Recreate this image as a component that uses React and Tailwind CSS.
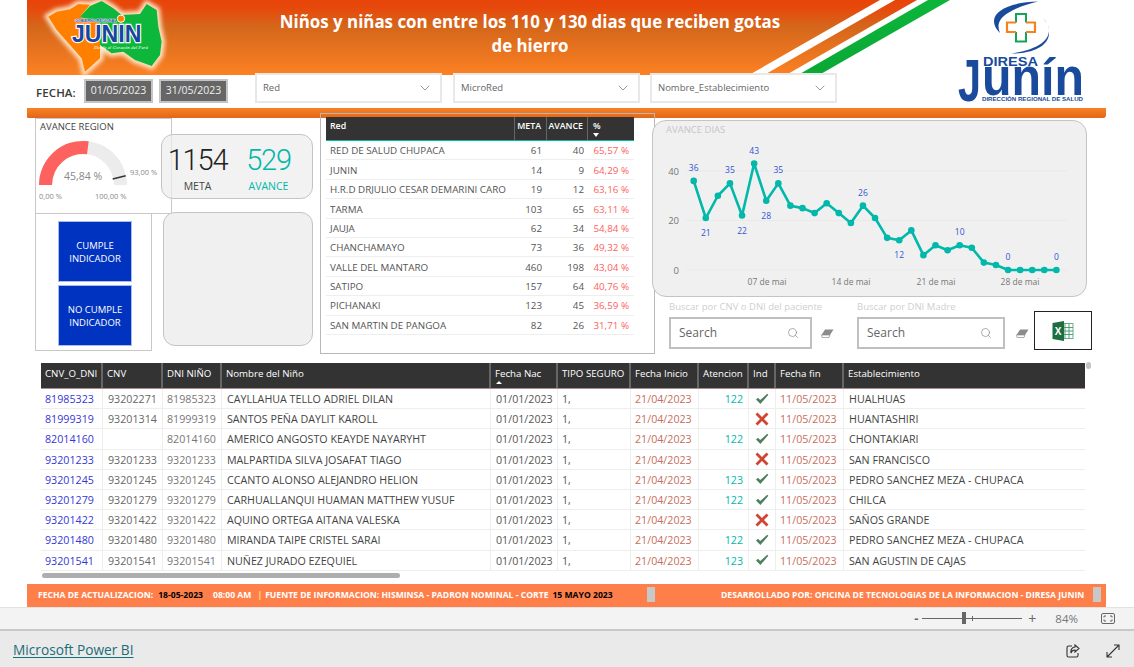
import { ChevronDown, Search } from 'lucide-react';

const redes = [
  ['RED DE SALUD CHUPACA', 61, 40, '65,57 %'],
  ['JUNIN', 14, 9, '64,29 %'],
  ['H.R.D DRJULIO CESAR DEMARINI CARO', 19, 12, '63,16 %'],
  ['TARMA', 103, 65, '63,11 %'],
  ['JAUJA', 62, 34, '54,84 %'],
  ['CHANCHAMAYO', 73, 36, '49,32 %'],
  ['VALLE DEL MANTARO', 460, 198, '43,04 %'],
  ['SATIPO', 157, 64, '40,76 %'],
  ['PICHANAKI', 123, 45, '36,59 %'],
  ['SAN MARTIN DE PANGOA', 82, 26, '31,71 %'],
];

const ninos = [
  ['81985323', '93202271', '81985323', 'CAYLLAHUA TELLO ADRIEL DILAN', '122', true, 'HUALHUAS'],
  ['81999319', '93201314', '81999319', 'SANTOS PEÑA DAYLIT KAROLL', '', false, 'HUANTASHIRI'],
  ['82014160', '', '82014160', 'AMERICO ANGOSTO KEAYDE NAYARYHT', '122', true, 'CHONTAKIARI'],
  ['93201233', '93201233', '93201233', 'MALPARTIDA SILVA JOSAFAT TIAGO', '', false, 'SAN FRANCISCO'],
  ['93201245', '93201245', '93201245', 'CCANTO ALONSO ALEJANDRO HELION', '123', true, 'PEDRO SANCHEZ MEZA - CHUPACA'],
  ['93201279', '93201279', '93201279', 'CARHUALLANQUI HUAMAN MATTHEW YUSUF', '122', true, 'CHILCA'],
  ['93201422', '93201422', '93201422', 'AQUINO ORTEGA AITANA VALESKA', '', false, 'SAÑOS GRANDE'],
  ['93201480', '93201480', '93201480', 'MIRANDA TAIPE CRISTEL SARAI', '122', true, 'PEDRO SANCHEZ MEZA - CHUPACA'],
  ['93201541', '93201541', '93201541', 'NUÑEZ JURADO EZEQUIEL', '123', true, 'SAN AGUSTIN DE CAJAS'],
];

const avance = [36, 21, 30, 35, 22, 43, 28, 35, 26, 25, 23, 27, 23, 19, 26, 21, 13, 12, 16, 6, 10, 8, 10, 9, 3, 2, 0, 0, 0, 0, 0];
const etiquetas = { 0: -1, 1: 1, 3: -1, 4: 1, 5: -1, 6: 1, 7: -1, 14: -1, 17: 1, 22: -1, 26: -1, 30: -1 };

const gridCols = 'grid grid-cols-[62px_60px_59px_269px_67px_73px_68px_50px_27px_68px_240px]';
const celda = 'h-full flex items-center border-r border-[#eee] whitespace-nowrap pt-[1px]';

function Banner() {
  return (
    <div className="relative h-[75px] flex">
      <svg className="absolute inset-0" width="1079" height="75" viewBox="0 0 1079 75">
        <defs>
          <linearGradient id="naranja" gradientUnits="userSpaceOnUse" x1="0" y1="0" x2="0" y2="75">
            <stop offset="0" stopColor="#e8440a" />
            <stop offset="0.12" stopColor="#e64a0c" />
            <stop offset="0.35" stopColor="#d4661b" />
            <stop offset="1" stopColor="#fc8123" />
          </linearGradient>
          <linearGradient id="verde" gradientUnits="userSpaceOnUse" x1="0" y1="0" x2="0" y2="75">
            <stop offset="0" stopColor="#0cb53a" />
            <stop offset="1" stopColor="#0aa836" />
          </linearGradient>
        </defs>
        <polygon points="0,0 853,0 722,75 0,75" fill="url(#naranja)" />
        <polygon points="868,0 890,0 759,75 737,75" fill="url(#naranja)" />
        <polygon points="901,0 923,0 792,75 771,75" fill="url(#verde)" />
      </svg>
      <LogoGobierno />
      <h1 className="relative w-[530px] ml-[90px] px-[10px] pt-[10px] text-center text-white font-bold text-[16.9px] leading-[24px]">
        Niños y niñas con entre los 110 y 130 dias que reciben gotas de hierro
      </h1>
      <LogoDiresa />
    </div>
  );
}

function LogoGobierno() {
  return (
    <svg className="relative ml-[8px] shrink-0" width="140" height="76" viewBox="0 0 420 228">
      <defs>
        <filter id="halo" x="-20%" y="-20%" width="140%" height="140%">
          <feGaussianBlur stdDeviation="7" />
        </filter>
      </defs>
      <path
        d="M65 35 L105 28 L130 12 L165 14 L200 3 L235 25 L260 45 L315 42 L335 12 L365 30 L370 80 L380 125 L375 165 L350 198 L300 180 L265 155 L230 160 L195 140 L195 175 L150 215 L140 175 L105 135 L65 90 L40 50 Z"
        fill="#ffe3c2"
        stroke="#ffe3c2"
        strokeWidth="20"
        filter="url(#halo)"
      />
      <path d="M65 35 L105 28 L130 12 L165 14 L135 50 L195 70 L195 175 L150 215 L140 175 L105 135 L65 90 L40 50 Z" fill="#ff8000" />
      <path d="M135 50 L165 18 L200 3 L235 25 L260 45 L315 42 L335 12 L365 30 L370 80 L380 125 L375 165 L350 198 L300 180 L265 155 L230 160 L195 135 L195 70 Z" fill="#0cb73b" />
      <circle cx="258" cy="56" r="11" fill="#ff8000" stroke="#fff" strokeWidth="3" />
      <text x="120" y="66" textLength="125" lengthAdjust="spacingAndGlyphs" fontFamily="Liberation Sans" fontWeight="700" fontSize="11" fill="#1746a2" stroke="#fff" strokeWidth="2" paintOrder="stroke">GOBIERNO REGIONAL</text>
      <text x="215" y="125" textAnchor="middle" textLength="208" lengthAdjust="spacingAndGlyphs" fontFamily="Liberation Sans" fontWeight="700" fontSize="72" fill="#1746a2" stroke="#fff" strokeWidth="7" paintOrder="stroke">JUNIN</text>
      <text x="258" y="146" textAnchor="middle" fontFamily="Liberation Serif" fontStyle="italic" fontSize="15" fill="#fff">Desde el Corazón del Perú</text>
    </svg>
  );
}

function LogoDiresa() {
  return (
    <svg className="relative ml-[155px] shrink-0" width="150" height="116" viewBox="0 0 150 116">
      <path d="M88 1.5 C62 2 44 10 44 21 C44 26 47 30 50 33 C47 26 48 19 58 13 C66 8 77 4 88 1.5 Z" fill="#1a4a9c" />
      <path d="M93 18 C100 26 102 35 92 43 C84 49 72 52 61 53.5 C78 54 99 48 99 33 C99 27 97 22 93 18 Z" fill="#1a4a9c" />
      <path d="M66 22.5 V14 H76 V22.5 M66 32 V41.5 H76 V32" fill="none" stroke="#12a55a" strokeWidth="2" />
      <path d="M66 22.5 H57 V32 H66 M76 22.5 H85 V32 H76" fill="none" stroke="#f58220" strokeWidth="2.2" />
      <text x="33" y="66" textLength="55" lengthAdjust="spacingAndGlyphs" fontFamily="Liberation Sans" fontWeight="700" fontSize="12.5" fill="#1a4a9c">DIRESA</text>
      <text x="8" y="101" textLength="23" lengthAdjust="spacingAndGlyphs" fontFamily="Liberation Sans" fontWeight="700" fontSize="60" fill="#1a4a9c">J</text>
      <text x="32" y="95" textLength="102" lengthAdjust="spacingAndGlyphs" fontFamily="Liberation Sans" fontWeight="700" fontSize="51" fill="#1a4a9c">unín</text>
      <text x="32" y="101" textLength="101" lengthAdjust="spacingAndGlyphs" fontFamily="Liberation Sans" fontWeight="700" fontSize="5" fill="#1a4a9c">DIRECCIÓN REGIONAL DE SALUD</text>
    </svg>
  );
}

function Slicer({ label, className }) {
  return (
    <div className={`w-[187px] h-[30px] bg-white border-2 border-[#e8e8e8] flex items-center justify-between pl-[6px] pr-[7px] ${className}`}>
      <span className="text-[9.5px] text-[#666]">{label}</span>
      <ChevronDown size={16} strokeWidth={0.9} className="text-[#555]" />
    </div>
  );
}

function Filtros() {
  return (
    <div className="relative h-[35px] -mt-[2px] flex items-start">
      <span className="ml-[9px] mt-[11px] w-[49px] text-[11.5px] font-semibold text-[#3a3a3a] tracking-[0.1px]">FECHA:</span>
      <span className="mt-[6px] -ml-[1px] w-[69px] h-[24px] bg-[#666] border-2 border-[#c4c4c4] flex items-center justify-center text-[10.5px] text-[#eee]">01/05/2023</span>
      <span className="mt-[6px] ml-[6px] w-[69px] h-[24px] bg-[#666] border-2 border-[#c4c4c4] flex items-center justify-center text-[10.5px] text-[#eee]">31/05/2023</span>
      <Slicer label="Red" className="ml-[27px]" />
      <Slicer label="MicroRed" className="ml-[11px]" />
      <Slicer label="Nombre_Establecimiento" className="ml-[10px]" />
    </div>
  );
}

function Gauge() {
  return (
    <div className="h-[96px] border border-[#c8c8c8] bg-white">
      <p className="pl-[4px] pt-[1px] text-[9.5px] leading-[13px] text-[#444]">AVANCE REGION</p>
      <svg width="134" height="70" viewBox="0 0 134 70" className="mt-[5px]">
        <path d="M 3 47 A 44 44 0 0 1 91 47 L 78 47 A 31 31 0 0 0 16 47 Z" fill="#ececec" />
        <path d="M 3 47 A 44 44 0 0 1 52.7 3.3 L 51 16.2 A 31 31 0 0 0 16 47 Z" fill="#fd625e" />
        <line x1="76.7" y1="41" x2="89.7" y2="37.7" stroke="#333" strokeWidth="1.4" />
        <text x="47" y="42" textAnchor="middle" fontSize="10.5" fill="#888">45,84 %</text>
        <text x="3" y="61" fontSize="7.5" fill="#888">0,00 %</text>
        <text x="59" y="61" fontSize="7.5" fill="#888">100,00 %</text>
        <text x="94" y="37" fontSize="7.5" fill="#888">93,00 %</text>
      </svg>
    </div>
  );
}

function BotonAzul({ children }) {
  return (
    <div className="w-[74px] h-[61px] bg-[#0033bf] border border-[#a9bde8] flex items-center justify-center text-center text-[9.5px] leading-[13px] text-white">
      {children}
    </div>
  );
}

function Kpi({ valor, label, color, labelColor }) {
  return (
    <div className="w-[71px] flex flex-col items-center">
      <span className={`font-['Roboto'] font-light text-[29px] leading-[32px] tracking-[-1.2px] ${color}`}>{valor}</span>
      <span className={`text-[10.5px] leading-[14px] mt-[3px] ${labelColor}`}>{label}</span>
    </div>
  );
}

function TablaRedes() {
  return (
    <div className="relative w-[335px] h-[241px] -mt-[5px] ml-[7px] border border-[#b8b8b8] pl-[5px] pt-[3px]">
      <div className="w-[308px]">
        <div className="grid grid-cols-[189px_32px_41px_46px] h-[24px] bg-[#333] border-b border-[#01b8aa] text-[8.8px] font-semibold text-white">
          <span className="pl-[4px] pt-[3px] border-r border-[#666]">Red</span>
          <span className="pr-[5px] pt-[3px] text-right border-r border-[#666]">META</span>
          <span className="pr-[4px] pt-[3px] text-right border-r border-[#666]">AVANCE</span>
          <span className="relative pl-[5px] pt-[3px]">
            %
            <span className="absolute left-[5px] top-[16px] w-0 h-0 border-l-[3px] border-r-[3px] border-t-[4px] border-l-transparent border-r-transparent border-t-white" />
          </span>
        </div>
        {redes.map(([red, meta, av, pct]) => (
          <div key={red} className="grid grid-cols-[189px_32px_41px_46px] h-[19.4px] pt-[3px] items-center border-b border-[#eee] text-[9.8px] text-[#555]">
            <span className="pl-[4px] whitespace-nowrap">{red}</span>
            <span className="pr-[5px] text-right">{meta}</span>
            <span className="pr-[4px] text-right">{av}</span>
            <span className="pr-[5px] text-right text-[#fd625e]">{pct}</span>
          </div>
        ))}
      </div>
    </div>
  );
}

function GraficoDias() {
  const px = (i) => 40.7 + i * 12.09;
  const py = (v) => 149 - v * 2.475;
  const puntos = avance.map((v, i) => `${px(i)},${py(v)}`).join(' ');
  return (
    <div className="w-[435px] h-[177px] rounded-[14px] border border-[#c4c4c4] bg-[#f0f0f0]">
      <svg width="433" height="175" viewBox="0 0 433 175">
        <text x="13" y="12" fontSize="9.5" fill="#c6c6c6">AVANCE DIAS</text>
        {[0, 20, 40].map((v) => (
          <g key={v}>
            <line x1="33" x2="414" y1={py(v)} y2={py(v)} stroke="#e9e9e9" />
            <text x="26" y={py(v) + 3.5} textAnchor="end" fontSize="9.5" fill="#777">{v}</text>
          </g>
        ))}
        {[['07 de mai', 114], ['14 de mai', 198], ['21 de mai', 283], ['28 de mai', 367]].map(([t, x]) => (
          <text key={t} x={x} y="164" textAnchor="middle" fontSize="8.5" fill="#777">{t}</text>
        ))}
        <polyline points={puntos} fill="none" stroke="#01b8aa" strokeWidth="2.6" strokeLinejoin="round" />
        {avance.map((v, i) => (
          <circle key={i} cx={px(i)} cy={py(v)} r="3.3" fill="#01b8aa" />
        ))}
        {Object.entries(etiquetas).map(([i, dir]) => (
          <text
            key={i}
            x={px(+i)}
            y={py(avance[i]) + (dir < 0 ? -10 : 18)}
            textAnchor="middle"
            fontSize="8.5"
            fill="#2f55d4"
          >
            {avance[i]}
          </text>
        ))}
      </svg>
    </div>
  );
}

function Borrador() {
  return (
    <svg width="13" height="9" viewBox="0 0 13 9" className="shrink-0">
      <path d="M4 0.5 H12.5 L9 6 H0.5 Z" fill="#8c8c8c" />
      <path d="M0.5 6 H9 L8 8.5 H1 Z" fill="#fff" stroke="#8c8c8c" strokeWidth="0.7" />
    </svg>
  );
}

function Buscador({ label, ancho, anchoCaja, gapBorrador }) {
  return (
    <div className={ancho}>
      <p className="text-[9.5px] leading-[13px] text-[#cfcfcf] whitespace-nowrap">{label}</p>
      <div className="mt-[4px] flex items-center">
        <div className={`${anchoCaja} h-[32px] border-2 border-[#c0c0c0] bg-white flex items-center justify-between pl-[8px] pr-[11px]`}>
          <span className="text-[12px] text-[#666]">Search</span>
          <Search size={12} strokeWidth={1.2} className="text-[#777]" />
        </div>
        <span className={gapBorrador}><Borrador /></span>
      </div>
    </div>
  );
}

function IconoExcel() {
  return (
    <svg width="22" height="20" viewBox="0 0 22 20">
      <rect x="9" y="2.5" width="12" height="15" fill="#fff" stroke="#6fae8d" />
      <path d="M13 2.5 V17.5 M17 2.5 V17.5 M9 6.5 H21 M9 10 H21 M9 13.5 H21" stroke="#3f9a6b" strokeWidth="0.9" />
      <polygon points="0.5,2 12,0 12,20 0.5,18" fill="#1d6f42" />
      <text x="6.2" y="13.5" textAnchor="middle" fontFamily="Liberation Sans" fontWeight="700" fontSize="10" fill="#fff">X</text>
    </svg>
  );
}

function FiltrosBusqueda() {
  return (
    <div className="relative h-[56px] flex items-start">
      <div className="ml-[17px] mt-[3px]">
        <Buscador label="Buscar por CNV o DNI del paciente" ancho="w-[188px]" anchoCaja="w-[143px]" gapBorrador="ml-[9px]" />
      </div>
      <div className="mt-[3px]">
        <Buscador label="Buscar por DNI Madre" ancho="w-[177px]" anchoCaja="w-[148px]" gapBorrador="ml-[11px]" />
      </div>
      <div className="mt-[14px] w-[58px] h-[39px] border-[1.5px] border-[#222] bg-white flex items-center justify-center">
        <IconoExcel />
      </div>
    </div>
  );
}

function IconoInd({ ok }) {
  if (ok) {
    return (
      <svg width="14" height="12" viewBox="0 0 14 12">
        <path d="M1 6.5 L3 4.8 L5.2 7 L12.2 0.8 L13.4 1.8 L5.4 11 Z" fill="#4f7f5f" />
      </svg>
    );
  }
  return (
    <svg width="14" height="14" viewBox="0 0 14 14">
      <path d="M1.5 1.5 L12.5 12.5 M12.5 1.5 L1.5 12.5" stroke="#cf4433" strokeWidth="2.8" />
    </svg>
  );
}

function TablaNinos() {
  const headers = ['CNV_O_DNI', 'CNV', 'DNI NIÑO', 'Nombre del Niño', 'Fecha Nac', 'TIPO SEGURO', 'Fecha Inicio', 'Atencion', 'Ind', 'Fecha fin', 'Establecimiento'];
  return (
    <div className="relative ml-[14px] w-[1044px]">
      <div className={`${gridCols} h-[26px] bg-[#333] border-b border-[#a98d8d] text-[9.7px] text-white`}>
        {headers.map((h) => (
          <span key={h} className="relative pl-[4px] pt-[4px] border-r-2 border-[#666] last:border-r-0 whitespace-nowrap">
            {h}
            {h === 'Fecha Nac' && (
              <span className="absolute left-[5px] top-[18px] w-0 h-0 border-l-[3px] border-r-[3px] border-b-[3px] border-l-transparent border-r-transparent border-b-white" />
            )}
          </span>
        ))}
      </div>
      {ninos.map((n) => (
        <div key={n[0]} className={`${gridCols} h-[20.2px] border-b border-[#eee] text-[10.7px] text-[#444]`}>
          <span className={`${celda} pl-[4px] text-[#3636d6]`}>{n[0]}</span>
          <span className={`${celda} pl-[5px] text-[#666]`}>{n[1]}</span>
          <span className={`${celda} pl-[4px] text-[#777]`}>{n[2]}</span>
          <span className={`${celda} pl-[5px]`}>{n[3]}</span>
          <span className={`${celda} pl-[5px] text-[#555]`}>01/01/2023</span>
          <span className={`${celda} pl-[4px] text-[#555]`}>1,</span>
          <span className={`${celda} pl-[4px] text-[#c66e5b]`}>21/04/2023</span>
          <span className={`${celda} pr-[5px] justify-end text-[#01b8aa]`}>{n[4]}</span>
          <span className="h-full flex items-center border-r border-[#eee] pl-[6px]"><IconoInd ok={n[5]} /></span>
          <span className={`${celda} pl-[4px] text-[#c66e5b]`}>11/05/2023</span>
          <span className="h-full flex items-center whitespace-nowrap pt-[1px] pl-[5px]">{n[6]}</span>
        </div>
      ))}
      <div className="absolute right-[-6px] top-[-1px] w-[5px] h-[7px] rounded-full bg-[#c4c4c4]" />
      <div className="mt-[2px] w-[358px] h-[5px] ml-[1px] rounded-full bg-[#aeaeae]" />
    </div>
  );
}

function PieReporte() {
  return (
    <div className="relative mt-[6px] h-[23px] bg-[#ff7f4a] flex items-center text-[8.6px] font-bold text-white whitespace-nowrap">
      <span className="ml-[11px]">FECHA DE ACTUALIZACION:</span>
      <span className="ml-[5px] text-black">18-05-2023</span>
      <span className="ml-[10px]">08:00 AM</span>
      <span className="ml-[6px] text-[#ffe070]">|</span>
      <span className="ml-[3px]">FUENTE DE INFORMACION: HISMINSA - PADRON NOMINAL - CORTE</span>
      <span className="ml-[4px] text-black">15 MAYO 2023</span>
      <span className="absolute left-[620px] top-[3px] w-[8px] h-[15px] bg-[#c8c8c8]" />
      <span className="absolute left-[694px] top-[5px]">DESARROLLADO POR: OFICINA DE TECNOLOGIAS DE LA INFORMACION - DIRESA JUNIN</span>
      <span className="absolute right-[5px] top-[3px] w-[8px] h-[15px] bg-[#c8c8c8]" />
    </div>
  );
}

function BarraZoom() {
  return (
    <div className="h-[24px] bg-[#f3f3f3] border-t border-[#e2e2e2] border-b-2 border-b-[#c8c8c8] flex items-center justify-end pr-[19px] text-[#666]">
      <span className="text-[13px] font-bold leading-none mr-[4px]">-</span>
      <div className="relative w-[100px] h-[1px] bg-[#666]">
        <span className="absolute left-[40px] -top-[6px] w-[4px] h-[12px] bg-[#666]" />
        <span className="absolute left-[50px] -top-[2px] w-[1px] h-[5px] bg-[#666]" />
      </div>
      <span className="ml-[6px] text-[14px] leading-none">+</span>
      <span className="ml-[19px] text-[11.5px] text-[#777]">84%</span>
      <svg width="14" height="11" viewBox="0 0 14 11" className="ml-[23px]">
        <rect x="0.5" y="0.5" width="13" height="10" rx="1.5" fill="none" stroke="#666" />
        <path d="M3 4.5 V3 H5 M11 4.5 V3 H9 M3 6.5 V8 H5 M11 6.5 V8 H9" fill="none" stroke="#666" />
      </svg>
    </div>
  );
}

function BarraPowerBi() {
  return (
    <div className="flex-1 bg-[#eaeaea] flex items-center justify-between pl-[13px] pr-[14px] pt-[3px]">
      <a className="text-[13.7px] text-[#1b6d78] underline underline-offset-2">Microsoft Power BI</a>
      <div className="flex items-center gap-[26px]">
        <svg width="14" height="14" viewBox="0 0 14 14" fill="none" stroke="#333" strokeWidth="1.1">
          <path d="M6 2 H2.5 A1.5 1.5 0 0 0 1 3.5 V11.5 A1.5 1.5 0 0 0 2.5 13 H10.5 A1.5 1.5 0 0 0 12 11.5 V9" />
          <path d="M9 1 L13 4.5 L9 8 V6 C7 6 5.5 7 5 9 C4.5 6 6 3.5 9 3 Z" />
        </svg>
        <svg width="14" height="14" viewBox="0 0 14 14" fill="none" stroke="#333" strokeWidth="1.1">
          <path d="M1 13 L13 1 M8 1 H13 V6 M1 8 V13 H6" />
        </svg>
      </div>
    </div>
  );
}

export default function App() {
  return (
    <div className="w-[1134px] h-[667px] overflow-hidden bg-white flex flex-col font-['Open_Sans',sans-serif]">
      <div className="h-[607px] pl-[27px] pr-[28px]">
        <Banner />
        <Filtros />
        <div className="h-[10px] bg-gradient-to-b from-[#fc8123] to-[#e0661a] rounded-br-[3px] rounded-bl-[1px]" />
        <div className="flex h-[245px] items-start">
          <div className="relative ml-[8px] w-[137px]">
            <Gauge />
            <div className="w-[117px] h-[138px] -mt-[1px] border border-[#c8c8c8] pl-[22px] pt-[7px] flex flex-col gap-[3px]">
              <BotonAzul>CUMPLE<br />INDICADOR</BotonAzul>
              <BotonAzul>NO CUMPLE<br />INDICADOR</BotonAzul>
            </div>
          </div>
          <div className="relative -ml-[11px] w-[152px] pt-[16px]">
            <div className="h-[65px] rounded-[12px] border border-[#c4c4c4] bg-[#ececec]/70 flex pt-[9px]">
              <Kpi valor="1154" label="META" color="text-[#222]" labelColor="text-[#444]" />
              <Kpi valor="529" label="AVANCE" color="text-[#01b8aa]" labelColor="text-[#01b8aa]" />
            </div>
            <div className="mt-[13px] ml-[2px] w-[150px] h-[134px] rounded-[12px] border border-[#c4c4c4] bg-[#f0f0f0]" />
          </div>
          <TablaRedes />
          <div className="relative -ml-[3px] mt-[2px] w-[440px]">
            <GraficoDias />
            <FiltrosBusqueda />
          </div>
        </div>
        <TablaNinos />
        <PieReporte />
      </div>
      <BarraZoom />
      <BarraPowerBi />
    </div>
  );
}
